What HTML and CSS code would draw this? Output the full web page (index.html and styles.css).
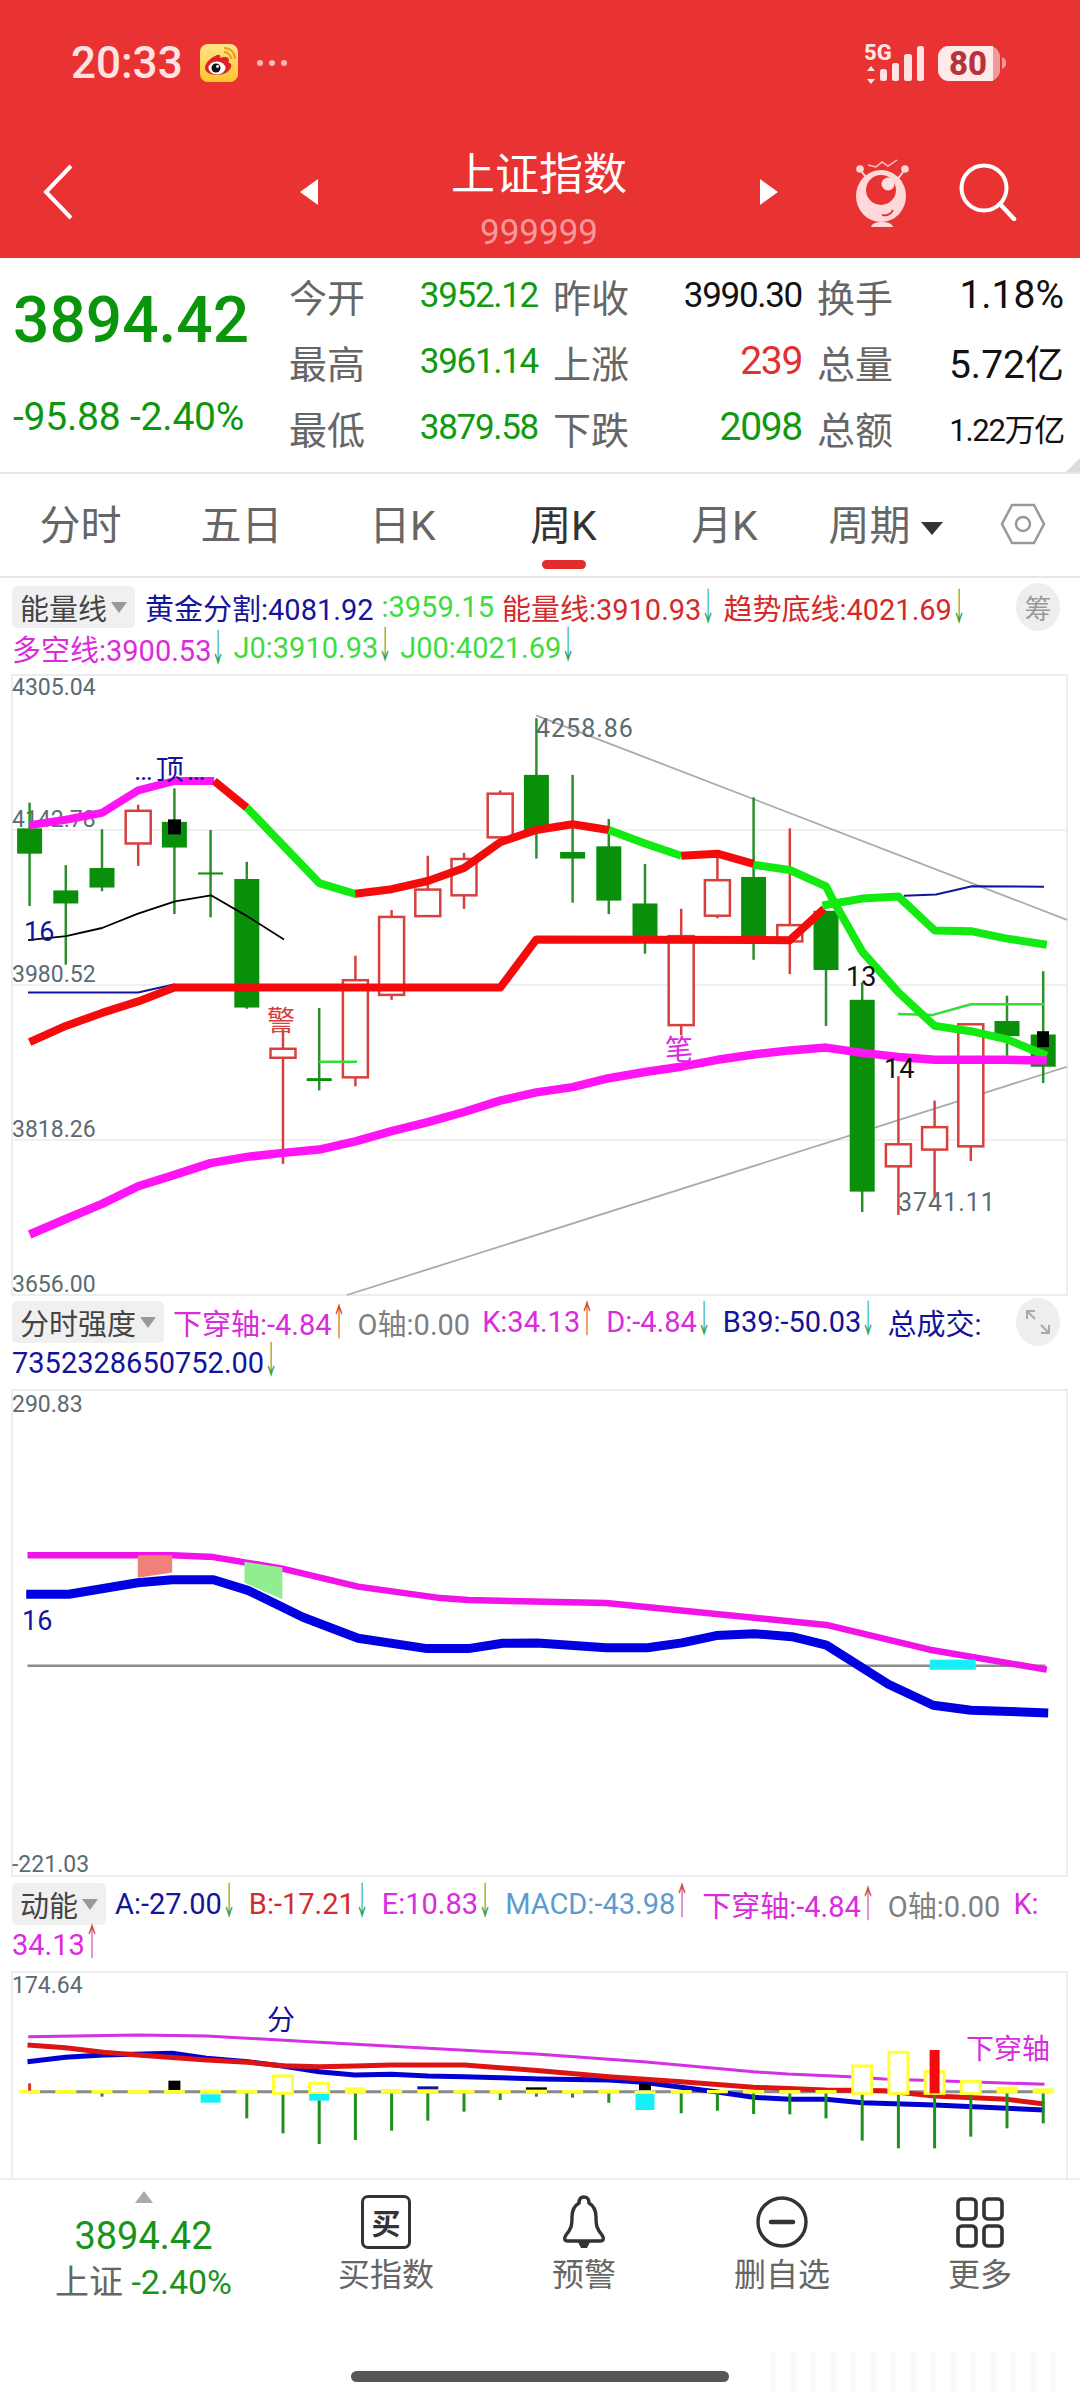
FILE: index.html
```html
<!DOCTYPE html>
<html lang="zh-CN">
<head>
  <meta charset="UTF-8" />
  <meta name="viewport" content="width=device-width, initial-scale=1" />
  <title>上证指数</title>
  <link rel="stylesheet" href="styles.css">
</head>
<body>
  <div id="app">
    <header class="top">
      <div class="status">
        <span class="clock">20:33</span>
        <svg class="weibo" width="38" height="38" viewBox="0 0 38 38">
          <defs>
            <linearGradient id="wb" x1="0" y1="0" x2="0" y2="1">
              <stop offset="0" stop-color="#ffe58a" />
              <stop offset="1" stop-color="#ffc52e" />
            </linearGradient>
          </defs>
          <rect width="38" height="38" rx="8" fill="url(#wb)" />
          <path d="M5 24c0-6 7-11 12-13 3-1 4 1 3 3 5-2 9-1 9 2 0 1 0 2-1 2 3 1 4 3 3 5-1 5-8 8-14 8-7 0-12-3-12-7z" fill="#d9252a" />
          <ellipse cx="17" cy="24" rx="8.5" ry="6.5" fill="#fff" />
          <circle cx="16" cy="24" r="4.5" fill="#111" />
          <circle cx="17.5" cy="22.5" r="1.4" fill="#fff" />
          <path d="M24 8c4 0 7 3 7 7M24 4c7 0 11 5 11 11" fill="none" stroke="#f29a20" stroke-width="2" />
        </svg>
        <span class="more-dots"><i></i><i></i><i></i></span>
        <svg class="net" width="143" height="52" viewBox="865 36 143 52">
          <text class="net-5g" x="864" y="59">5G</text>
          <path d="M871 65l4 5h-8zM871 83l4-5h-8z" fill="#ffe3e3" />
          <rect x="880" y="68" width="7" height="12" rx="2.5" fill="#ffe3e3" />
          <rect x="892" y="62" width="7" height="18" rx="2.5" fill="#ffe3e3" />
          <rect x="904" y="53" width="8" height="27" rx="2.5" fill="#ffe3e3" />
          <rect x="917" y="45" width="7" height="35" rx="2.5" fill="#ffe3e3" />
          <rect x="938" y="45" width="62" height="35" rx="11" fill="#f29a9a" />
          <path d="M949 45h44v35h-44a11 11 0 0 1-11-11V56a11 11 0 0 1 11-11z" fill="#ffe9e9" />
          <path d="M1002 56c3 1 4 3 4 6s-1 5-4 6z" fill="#f29a9a" />
          <text class="net-batt" x="968" y="74">80</text>
        </svg>
      </div>

      <nav class="titlebar">
        <div class="tb-left">
          <svg width="32" height="56" viewBox="0 0 32 56"><path d="M29 2L4 28l25 26" fill="none" stroke="#fff" stroke-width="4" /></svg>
        </div>
        <div class="tb-center">
          <span class="tri-left"></span>
          <div class="tb-title">
            <div class="tb-name">上证指数</div>
            <div class="tb-code">999999</div>
          </div>
          <span class="tri-right"></span>
        </div>
        <div class="tb-right">
          <svg width="56" height="70" viewBox="0 0 56 70">
            <path d="M13 8l8 2 6-5 6 4 9-6" fill="none" stroke="#ffc4c4" stroke-width="1.5" />
            <circle cx="5" cy="12" r="3.8" fill="#ffd6d6" />
            <circle cx="50" cy="12" r="3.8" fill="#ffd6d6" />
            <path d="M7 15l6 8M48 15l-6 8" stroke="#ffd6d6" stroke-width="2" />
            <ellipse cx="26" cy="39" rx="25" ry="26" fill="#ffd9d9" />
            <circle cx="26" cy="33" r="15" fill="#e93333" />
            <circle cx="33" cy="27" r="6.5" fill="#ffe0e0" />
            <path d="M27 58c5 1 9-1 11-5" fill="none" stroke="#e93333" stroke-width="1.8" />
            <path d="M16 70c1-4 6-5 11-5s10 1 11 5z" fill="#ffd9d9" />
          </svg>
          <svg width="58" height="58" viewBox="0 0 58 58">
            <circle cx="25" cy="25" r="22.5" fill="none" stroke="#fff" stroke-width="4" />
            <path d="M41 41l14 15" stroke="#fff" stroke-width="4.5" stroke-linecap="round" />
          </svg>
        </div>
      </nav>
    </header>

    <section class="quote">
      <div class="quote-main">
        <div class="price">3894.42</div>
        <div class="change">-95.88 -2.40%</div>
      </div>
      <div class="stats">
        <div class="stat"><span>今开</span><b class="g">3952.12</b></div>
        <div class="stat"><span>昨收</span><b class="k">3990.30</b></div>
        <div class="stat"><span>换手</span><b class="k wide">1.18%</b></div>
        <div class="stat"><span>最高</span><b class="g">3961.14</b></div>
        <div class="stat"><span>上涨</span><b class="r big">239</b></div>
        <div class="stat"><span>总量</span><b class="k wide">5.72亿</b></div>
        <div class="stat"><span>最低</span><b class="g">3879.58</b></div>
        <div class="stat"><span>下跌</span><b class="g big">2098</b></div>
        <div class="stat"><span>总额</span><b class="k small">1.22万亿</b></div>
      </div>
      <span class="corner"></span>
    </section>

    <div class="tabs">
      <div class="tab">分时</div>
      <div class="tab">五日</div>
      <div class="tab">日K</div>
      <div class="tab active">周K<i></i></div>
      <div class="tab">月K</div>
      <div class="tab">周期<span class="caret"></span></div>
      <div class="tab-gear">
        <svg width="46" height="44" viewBox="0 0 46 44">
          <path d="M12 3h22l10 19-10 19H12L2 22z" fill="none" stroke="#999" stroke-width="2.5" />
          <circle cx="23" cy="22" r="7" fill="none" stroke="#999" stroke-width="2.5" />
        </svg>
      </div>
    </div>

    <div class="legend lg-a">
      <div class="row">
        <span class="pick">能量线<u></u></span>
        <span class="navy">黄金分割:4081.92</span>
        <span class="lime">:3959.15</span>
        <span class="red">能量线:3910.93<em class="dn">↓</em></span>
        <span class="red">趋势底线:4021.69<em class="dn">↓</em></span>
        <span class="round">筹</span>
      </div>
      <div class="row">
        <span class="pink">多空线:3900.53<em class="dn">↓</em></span>
        <span class="lime">J0:3910.93<em class="dn">↓</em></span>
        <span class="lime">J00:4021.69<em class="dn">↓</em></span>
      </div>
    </div>

    <svg id="kline" class="chart" width="1080" height="622" viewBox="0 675 1080 622">
      <rect class="frame" x="12" y="675" width="1055" height="620" />
      <path class="grid" d="M12 830H1067M12 985H1067M12 1140H1067" />
      <text class="axis" x="12" y="695">4305.04</text>
      <text class="axis" x="12" y="827">4142.78</text>
      <text class="axis" x="12" y="982">3980.52</text>
      <text class="axis" x="12" y="1137">3818.26</text>
      <text class="axis" x="12" y="1292">3656.00</text>
      <g id="k-shapes"></g>
      <text class="note note-navy note-top" x="134" y="780">…顶…</text>
      <text class="tag tag-navy" x="24" y="941">16</text>
      <text class="note note-red" x="267" y="1031">警</text>
      <text class="note note-pink" x="665" y="1060">笔</text>
      <text class="tag" x="846" y="986">13</text>
      <text class="tag" x="884" y="1078">14</text>
      <text class="axis axis-lg" x="898" y="1211">3741.11</text>
      <text class="axis axis-lg" x="536" y="737">4258.86</text>
    </svg>

    <div class="legend lg-b">
      <div class="row">
        <span class="pick">分时强度<u></u></span>
        <span class="pink">下穿轴:-4.84<em class="up">↑</em></span>
        <span class="gray">O轴:0.00</span>
        <span class="pink">K:34.13<em class="up">↑</em></span>
        <span class="pink">D:-4.84<em class="dn">↓</em></span>
        <span class="navy">B39:-50.03<em class="dn">↓</em></span>
        <span class="navy">总成交:</span>
        <span class="round">
          <svg width="26" height="26" viewBox="0 0 26 26"><path d="M2 10V2h8M2 2l8 8M24 16v8h-8M24 24l-8-8" fill="none" stroke="#aaa" stroke-width="2" /></svg>
        </span>
      </div>
      <div class="row">
        <span class="navy">7352328650752.00<em class="dn">↓</em></span>
      </div>
    </div>

    <svg id="force" class="chart" width="1080" height="488" viewBox="0 1390 1080 488">
      <rect class="frame" x="12" y="1390" width="1055" height="486" />
      <text class="axis" x="12" y="1412">290.83</text>
      <text class="axis" x="12" y="1872">-221.03</text>
      <g id="f-shapes"></g>
      <text class="tag tag-navy" x="22" y="1630">16</text>
    </svg>

    <div class="legend lg-c">
      <div class="row">
        <span class="pick">动能<u></u></span>
        <span class="navy">A:-27.00<em class="dn">↓</em></span>
        <span class="red">B:-17.21<em class="dn">↓</em></span>
        <span class="pink">E:10.83<em class="dn">↓</em></span>
        <span class="steel">MACD:-43.98<em class="up">↑</em></span>
        <span class="pink">下穿轴:-4.84<em class="up">↑</em></span>
        <span class="gray">O轴:0.00</span>
        <span class="pink">K:</span>
      </div>
      <div class="row">
        <span class="pink">34.13<em class="up">↑</em></span>
      </div>
    </div>

    <svg id="macd" class="chart" width="1080" height="206" viewBox="0 1972 1080 206">
      <path class="frame-open" d="M12 2178V1972H1067V2178" />
      <text class="axis" x="12" y="1993">174.64</text>
      <g id="m-shapes"></g>
      <text class="note note-navy" x="267" y="2030">分</text>
      <text class="note note-pink" x="966" y="2059">下穿轴</text>
    </svg>

    <footer class="bottom">
      <div class="bottom-row">
        <div class="mini">
          <span class="mini-up"></span>
          <div class="mini-price">3894.42</div>
          <div class="mini-sub">上证 <span>-2.40%</span></div>
        </div>
        <div class="action">
          <div class="buy-box">买</div>
          <span>买指数</span>
        </div>
        <div class="action">
          <svg width="48" height="54" viewBox="0 0 48 54">
            <path d="M24 2c-4 0-5 3-5 6-5 3-7 8-7 14 0 9-1 12-6 18-2 3-2 6 2 6h32c4 0 4-3 2-6-5-6-6-9-6-18 0-6-2-11-7-14 0-3-1-6-5-6z" fill="none" stroke="#333" stroke-width="3.4" />
            <path d="M18 47h12l-3 6h-6z" fill="#333" />
          </svg>
          <span>预警</span>
        </div>
        <div class="action">
          <svg width="52" height="54" viewBox="0 0 52 54">
            <circle cx="26" cy="27" r="24" fill="none" stroke="#333" stroke-width="3.4" />
            <path d="M15 27h22" stroke="#333" stroke-width="4.5" stroke-linecap="round" />
          </svg>
          <span>删自选</span>
        </div>
        <div class="action">
          <svg width="50" height="54" viewBox="0 0 50 54">
            <rect x="3" y="4" width="18" height="20" rx="4" fill="none" stroke="#333" stroke-width="3.6" />
            <rect x="29" y="4" width="18" height="20" rx="4" fill="none" stroke="#333" stroke-width="3.6" />
            <rect x="3" y="31" width="18" height="20" rx="4" fill="none" stroke="#333" stroke-width="3.6" />
            <rect x="29" y="31" width="18" height="20" rx="4" fill="none" stroke="#333" stroke-width="3.6" />
          </svg>
          <span>更多</span>
        </div>
      </div>
      <div class="home-bar"></div>
      <div class="smudge"></div>
    </footer>
  </div>

  <script src="chart.js"></script>
</body>
</html>
```

FILE: styles.css
```css
* {
  box-sizing: border-box;
}
body {
  margin: 0;
  background: #fff;
  color: #333;
  font-family: Roboto, "Noto Sans CJK SC", sans-serif;
}
#app {
  width: 1080px;
  height: 2400px;
  overflow: hidden;
}

/* header */
.top {
  height: 258px;
  background: #e93333;
}
.status {
  height: 126px;
  display: flex;
  align-items: center;
  padding-left: 71px;
}
.clock {
  font-size: 44px;
  font-weight: 500;
  color: #ffe3e3;
  width: 129px;
}
.more-dots {
  display: flex;
  gap: 6px;
  margin-left: 19px;
}
.more-dots i {
  width: 6px;
  height: 6px;
  border-radius: 50%;
  background: #f9b9b9;
}
.net {
  margin-left: auto;
  margin-right: 72px;
}
.net-5g {
  font: 800 22px Roboto, sans-serif;
  fill: #ffe3e3;
}
.net-batt {
  font: 800 33px Roboto, sans-serif;
  text-anchor: middle;
  fill: #b5343c;
}
.titlebar {
  height: 132px;
  display: grid;
  grid-template-columns: 300px 478px 302px;
  align-items: center;
}
.tb-left {
  padding-left: 42px;
  display: flex;
}
.tb-center {
  display: flex;
  justify-content: space-between;
  align-items: center;
}
.tri-left,
.tri-right {
  width: 0;
  height: 0;
  border-top: 13px solid transparent;
  border-bottom: 13px solid transparent;
}
.tri-left {
  border-right: 18px solid #fff;
}
.tri-right {
  border-left: 18px solid #fff;
}
.tb-title {
  text-align: center;
  margin-top: 18px;
}
.tb-name {
  font-size: 44px;
  line-height: 56px;
  color: #fff;
}
.tb-code {
  font-size: 35px;
  font-weight: 400;
  line-height: 44px;
  margin-top: 8px;
  color: #f59a9a;
}
.tb-right {
  display: flex;
  align-items: center;
  padding-left: 77px;
  gap: 48px;
}

/* quote */
.quote {
  position: relative;
  height: 216px;
  display: flex;
  border-bottom: 2px solid #e6e6e6;
}
.quote-main {
  width: 289px;
  padding: 30px 0 0 13px;
}
.price {
  font-size: 64px;
  font-weight: 500;
  line-height: 66px;
  color: #0a950a;
}
.change {
  font-size: 39px;
  font-weight: 400;
  line-height: 40px;
  margin-top: 43px;
  color: #0f960f;
  white-space: nowrap;
  letter-spacing: -0.2px;
}
.stats {
  display: grid;
  grid-template-columns: 249px 249px 247px;
  grid-auto-rows: 66px;
  column-gap: 15px;
  padding-top: 4px;
}
.stat {
  display: flex;
  align-items: center;
  justify-content: space-between;
}
.stat span {
  font-size: 38px;
  color: #666;
}
.stat b {
  font-size: 35px;
  font-weight: 400;
  letter-spacing: -1.3px;
  white-space: nowrap;
}
.stat b.big {
  font-size: 39px;
}
.stat b.wide {
  font-size: 39px;
  letter-spacing: 0;
}
.stat b.small {
  font-size: 31px;
}
.g {
  color: #119a11;
}
.k {
  color: #111;
}
.r {
  color: #e03030;
}
.corner {
  position: absolute;
  right: 0;
  bottom: 0;
  border-left: 14px solid transparent;
  border-bottom: 14px solid #ddd;
}

/* tabs */
.tabs {
  height: 104px;
  display: flex;
  border-bottom: 2px solid #e6e6e6;
}
.tab {
  width: 161px;
  padding-top: 27px;
  text-align: center;
  font-size: 41px;
  line-height: 50px;
  color: #666;
}
.tab.active {
  color: #333;
}
.tab.active i {
  display: block;
  width: 44px;
  height: 9px;
  margin: 9px auto 0;
  border-radius: 5px;
  background: #e32d2d;
}
.caret {
  display: inline-block;
  margin-left: 10px;
  vertical-align: 5px;
  border-left: 11px solid transparent;
  border-right: 11px solid transparent;
  border-top: 13px solid #333;
}
.tab-gear {
  flex: 1;
  display: flex;
  justify-content: center;
  padding: 28px 0 0 0;
}

/* legends */
.legend {
  font-size: 29px;
  padding-left: 12px;
}
.lg-a {
  height: 97px;
  padding-top: 8px;
}
.lg-b {
  height: 93px;
  padding-top: 4px;
}
.lg-c {
  height: 94px;
  padding-top: 5px;
}
.row {
  display: flex;
  align-items: center;
  gap: 8px;
  height: 40px;
  white-space: nowrap;
}
.row:first-child {
  height: 42px;
  position: relative;
}
.lg-b .row {
  gap: 12px;
}
.lg-c .row {
  gap: 13px;
}
.pick {
  display: flex;
  align-items: center;
  height: 42px;
  padding: 0 8px;
  margin-right: 2px;
  border-radius: 5px;
  background: #f0f0f0;
  color: #444;
}
.lg-b .pick {
  margin-right: -3px;
}
.lg-c .pick {
  margin-right: -4px;
}
.pick u {
  margin-left: 4px;
  border-left: 8px solid transparent;
  border-right: 8px solid transparent;
  border-top: 11px solid #999;
}
.round {
  position: absolute;
  right: 20px;
  top: -3px;
  width: 44px;
  height: 48px;
  display: flex;
  align-items: center;
  justify-content: center;
  border-radius: 50%;
  background: #eee;
  color: #999;
  font-size: 27px;
}
.navy {
  color: #14149a;
}
.lime {
  color: #3fdc3f;
}
.red {
  color: #d42a2a;
}
.pink {
  color: #d92cdc;
}
.gray {
  color: #808080;
}
.steel {
  color: #5b9bd0;
}
/* tall thin arrows after the values, squeezed from the full width glyph */
.dn,
.up {
  display: inline-block;
  width: 38px;
  margin-right: -24px;
  font-family: "Noto Sans CJK SC", sans-serif;
  font-style: normal;
  font-size: 38px;
  line-height: 0;
  transform: scaleX(0.37);
  transform-origin: left center;
}
.dn {
  color: #2e9e4f;
}
.up {
  color: #d2442f;
}

/* charts */
.chart {
  display: block;
  overflow: visible;
}
.frame {
  fill: #fff;
  stroke: #e8e8e8;
  stroke-width: 1.5;
}
.frame-open {
  fill: #fff;
  stroke: #e8e8e8;
  stroke-width: 1.5;
}
.grid {
  stroke: #ebebeb;
  stroke-width: 1.5;
}
.axis {
  font-size: 23px;
  fill: #5c6a72;
}
.axis-lg {
  font-size: 25px;
  letter-spacing: 1px;
}
.tag {
  font-size: 27px;
  fill: #111;
}
.tag-navy {
  fill: #14149a;
}
.note {
  font-size: 28px;
}
.note-top {
  letter-spacing: 3px;
}
.note-navy {
  fill: #14149a;
}
.note-red {
  fill: #d84040;
}
.note-pink {
  fill: #d92cdc;
}
.ln {
  fill: none;
  stroke-linejoin: round;
}

/* bottom bar */
.bottom {
  position: relative;
  height: 222px;
  border-top: 2px solid #eee;
}
.bottom-row {
  display: grid;
  grid-template-columns: 287px repeat(4, 198px);
  height: 191px;
}
.mini {
  text-align: center;
  padding-top: 8px;
}
.mini-up {
  display: inline-block;
  border-left: 9px solid transparent;
  border-right: 9px solid transparent;
  border-bottom: 12px solid #aaa;
}
.mini-price {
  font-size: 38px;
  line-height: 46px;
  margin-top: 6px;
  color: #1a931a;
}
.mini-sub {
  font-size: 34px;
  line-height: 46px;
  color: #666;
}
.mini-sub span {
  color: #1a931a;
}
.action {
  display: flex;
  flex-direction: column;
  align-items: center;
  padding-top: 15px;
}
.action span {
  font-size: 32px;
  line-height: 40px;
  margin-top: 6px;
  color: #666;
}
.buy-box {
  width: 50px;
  height: 54px;
  display: flex;
  align-items: center;
  justify-content: center;
  border: 3.4px solid #333;
  border-radius: 7px;
  font-size: 29px;
  font-weight: 700;
  color: #333;
}
.home-bar {
  width: 378px;
  height: 11px;
  margin-left: 351px;
  border-radius: 6px;
  background: #575757;
}
.smudge {
  position: absolute;
  left: 770px;
  top: 172px;
  width: 290px;
  height: 40px;
  background: repeating-linear-gradient(90deg, #f3f3f3 0 6px, #fff 6px 20px);
  opacity: 0.5;
}
```

FILE: chart.js
```javascript
const NS = "http://www.w3.org/2000/svg";

// candle slots are the same on all three charts
const slot = i => 29.6 + i * 36.2;

// price chart y values were read at 2.45x, macd at 3x
const ky = v => 670 + v / 2.45;
const my = v => 1880 + v / 3;
const fx = v => v / 1.452;
const fy = v => 1290 + v / 2.613;

function add(parent, tag, attrs) {
  const el = document.createElementNS(NS, tag);
  Object.keys(attrs).forEach(k => el.setAttribute(k, attrs[k]));
  parent.appendChild(el);
  return el;
}

function line(parent, pts, color, width) {
  add(parent, "polyline", {
    class: "ln",
    points: pts.map(p => p[0].toFixed(1) + "," + p[1].toFixed(1)).join(" "),
    stroke: color,
    "stroke-width": width
  });
}

function kLine(parent, pts, color, width) {
  line(parent, pts.map(p => [slot(p[0]), ky(p[1])]), color, width);
}

/* ---- price chart ---- */
const kGroup = document.getElementById("k-shapes");

// [wick top, body top, body bottom, wick bottom, green?]
const candles = [
  [325, 388, 450, 578, 1],
  [478, 540, 572, 722, 1],
  [390, 485, 533, 542, 1],
  [330, 345, 425, 480, 0],
  [290, 372, 435, 598, 1],
  [392, 496, 501, 606, 1],
  [470, 512, 827, 830, 1],
  [880, 928, 950, 1210, 0],
  [828, 1000, 1007, 1030, 1],
  [700, 760, 998, 1020, 0],
  [588, 605, 796, 808, 0],
  [455, 538, 603, 605, 0],
  [448, 463, 552, 585, 0],
  [295, 303, 410, 410, 0],
  [118, 257, 392, 462, 1],
  [257, 446, 462, 570, 1],
  [365, 432, 565, 598, 1],
  [475, 572, 662, 695, 1],
  [585, 652, 870, 895, 0],
  [455, 515, 602, 608, 0],
  [312, 507, 660, 710, 1],
  [388, 625, 665, 745, 0],
  [590, 590, 735, 872, 1],
  [765, 808, 1278, 1328, 1],
  [995, 1162, 1216, 1335, 0],
  [1055, 1120, 1175, 1290, 0],
  [868, 868, 1167, 1203, 0],
  [798, 860, 897, 945, 1],
  [738, 893, 972, 1012, 1]
];

// trend lines sit under the candles
add(kGroup, "path", {
  d: `M536 ${ky(111)}L1067 ${ky(612)}M347 1295L1067 ${ky(972)}`,
  stroke: "#aaa",
  "stroke-width": 1.8,
  fill: "none"
});

candles.forEach((c, i) => {
  const x = slot(i);
  const wick = c[4] ? "#2b8f2b" : "#d84040";
  add(kGroup, "line", { x1: x, x2: x, y1: ky(c[0]), y2: ky(c[3]), stroke: wick, "stroke-width": 2.5 });
  const top = ky(c[1]);
  const h = ky(c[2]) - top;
  if (c[4]) {
    add(kGroup, "rect", { x: x - 12.5, y: top, width: 25, height: h, fill: "#0a8f0a" });
  } else {
    add(kGroup, "rect", { x: x - 12.5, y: top, width: 25, height: h, fill: "#fff", stroke: "#d84040", "stroke-width": 2.5 });
  }
});

add(kGroup, "rect", { x: 168, y: ky(366), width: 13, height: 15, fill: "#000" });
add(kGroup, "rect", { x: 1037, y: ky(885), width: 12, height: 16, fill: "#000" });

line(kGroup, [[28, ky(662)], [66, ky(652)], [102, ky(632)], [138, ky(597)], [175, ky(567)], [211, ky(552)], [247, ky(603)], [284, ky(660)]], "#000", 1.8);
line(kGroup, [[28, ky(790)], [138, ky(790)], [175, ky(770)]], "#14149a", 2);
line(kGroup, [[904, ky(553)], [936, ky(550)], [972, ky(530)], [1044, ky(531)]], "#14149a", 2);
line(kGroup, [[319, ky(960)], [357, ky(960)]], "#33dd33", 2.5);
line(kGroup, [[898, ky(843)], [933, ky(845)], [971, ky(819)], [1044, ky(819)]], "#33dd33", 2.5);

const M = "#ff14f5", R = "#f40c0c", G = "#12ea12";

// lower trend
kLine(kGroup, [[0, 912], [1, 872], [2, 840], [3, 812], [4, 778], [13, 778], [14, 660], [21, 662], [21.95, 585]], R, 8);
kLine(kGroup, [[21.9, 577], [23, 560], [24, 555], [25, 638], [26, 640], [27, 658], [28.1, 673]], G, 8);

// upper trend changes colour as it turns
kLine(kGroup, [[0, 380], [1, 367], [2, 350], [3, 295], [4, 272], [5.1, 272]], M, 8);
kLine(kGroup, [[5.1, 272], [6, 337]], R, 8);
kLine(kGroup, [[6, 337], [8, 522], [9.05, 550]], G, 8);
kLine(kGroup, [[9, 548], [10, 537], [11, 517], [12, 485], [13, 422], [14, 392], [15, 378], [16, 392]], R, 8);
kLine(kGroup, [[16, 392], [17, 425], [18, 455]], G, 8);
kLine(kGroup, [[18, 455], [19, 450], [20, 475]], R, 8);
kLine(kGroup, [[20, 477], [21, 490], [22, 530], [22.2, 565], [23, 690], [24, 790], [25, 872], [26, 885], [27, 905], [28.1, 945]], G, 8);

kLine(kGroup, [[0, 1383], [1, 1345], [2, 1308], [3, 1265], [4, 1237], [5, 1208], [6, 1193], [7, 1183], [8, 1175], [9, 1155], [10, 1130], [11, 1108], [12, 1083], [13, 1055], [14, 1035], [15, 1022], [16, 1000], [17, 985], [18, 972], [19, 955], [20, 942], [21, 932], [22, 925], [23, 938], [24, 948], [25, 955], [26, 955], [27, 955], [28.1, 957]], M, 8.5);

/* ---- force chart ---- */
const fGroup = document.getElementById("f-shapes");
const fPts = list => list.map(p => [fx(p[0]), fy(p[1])]);

add(fGroup, "line", { x1: fx(40), x2: fx(1518), y1: fy(982), y2: fy(982), stroke: "#8a8a8a", "stroke-width": 2.5 });
line(fGroup, fPts([[38, 795], [100, 795], [200, 765], [250, 757], [310, 757], [360, 785], [440, 855], [520, 910], [620, 937], [680, 937], [730, 923], [780, 922], [880, 935], [940, 935], [990, 922], [1040, 903], [1095, 898], [1150, 906], [1200, 928], [1290, 1030], [1355, 1085], [1410, 1098], [1522, 1105]]), "#0000e0", 9);
line(fGroup, fPts([[40, 693], [250, 693], [310, 698], [410, 728], [520, 775], [640, 805], [680, 810], [880, 818], [1200, 875], [1350, 940], [1520, 992]]), "#f014e8", 6.5);
add(fGroup, "polygon", { points: fPts([[200, 693], [250, 693], [250, 738], [200, 752]]).join(" "), fill: "#f08078" });
add(fGroup, "polygon", { points: fPts([[355, 710], [410, 725], [410, 808], [355, 765]]).join(" "), fill: "#90ee90" });
add(fGroup, "rect", { x: fx(1350), y: fy(966), width: 46, height: 10, fill: "#14f0f5" });

/* ---- macd chart ---- */
const mGroup = document.getElementById("m-shapes");
const mPts = list => list.map(p => [p[0] / 2.904, my(p[1])]);
const right = v => v + 1568; // right half of the chart was read from a second crop

add(mGroup, "line", { x1: 28, x2: 1050, y1: my(635), y2: my(635), stroke: "#8a8a8a", "stroke-width": 3 });

line(mGroup, mPts([[82, 470], [400, 465], [600, 468], [900, 485], [1568, 523], [right(300), 545], [right(620), 575], [right(720), 582], [right(900), 590], [right(1000), 597], [right(1465), 613]]), "#d430e4", 3);
line(mGroup, mPts([[80, 545], [190, 532], [300, 525], [500, 520], [600, 535], [720, 545], [820, 558], [927, 575], [1030, 585], [1137, 583], [1243, 588], [1348, 590], [1568, 597], [right(200), 600], [right(300), 607], [right(410), 622], [right(510), 635], [right(620), 652], [right(725), 658], [right(830), 658], [right(936), 668], [right(1146), 675], [right(1356), 685], [right(1465), 690]]), "#0000d0", 5);
line(mGroup, mPts([[80, 495], [190, 503], [300, 517], [400, 525], [600, 540], [720, 547], [820, 557], [927, 560], [1030, 558], [1137, 555], [1348, 555], [1568, 572], [right(200), 590], [right(410), 605], [right(620), 622], [right(830), 630], [right(1000), 632], [right(1146), 648], [right(1356), 658], [right(1465), 672]]), "#dd1414", 5);

// [yellow top, stem bottom, hollow?]
const bars = [
  [630, 0], [630, 0], [630, 650], [630, 0], [630, 0], [630, 0],
  [630, 715], [588, 760, 1], [610, 792, 1], [622, 780], [627, 752], [630, 722],
  [630, 695], [630, 660], [630, 650], [630, 653], [628, 668], [632, 0],
  [630, 700], [630, 692], [630, 702], [630, 703], [630, 715],
  [558, 782, 1], [517, 805, 1], [575, 805, 1], [604, 770, 1], [620, 745], [625, 730]
];

bars.forEach((b, i) => {
  const x = slot(i);
  if (b[1]) {
    add(mGroup, "line", { x1: x, x2: x, y1: my(640), y2: my(b[1]), stroke: "#1f8f1f", "stroke-width": 3 });
  }
  const top = my(b[0]);
  const h = my(640) - top;
  if (b[2]) {
    add(mGroup, "rect", { x: x - 9.5, y: top, width: 19, height: h, fill: "#fff", stroke: "#ffff33", "stroke-width": 3 });
  } else {
    add(mGroup, "rect", { x: x - 10.5, y: top, width: 21, height: h, fill: "#ffff33" });
  }
});

// odd ones on top of the yellow row
const extra = [
  [0, 610, 632, 3, "#dd3333"],
  [4, 602, 630, 12, "#000"],
  [5, 643, 668, 20, "#14f0f5"],
  [8, 642, 662, 20, "#14f0f5"],
  [11, 619, 628, 21, "#14149a"],
  [14, 622, 629, 21, "#000"],
  [17, 610, 630, 12, "#000"],
  [17, 642, 690, 19, "#14f0f5"],
  [25, 510, 640, 10, "#f40c0c"]
];
extra.forEach(e => {
  add(mGroup, "rect", { x: slot(e[0]) - e[3] / 2, y: my(e[1]), width: e[3], height: my(e[2]) - my(e[1]), fill: e[4] });
});
```
